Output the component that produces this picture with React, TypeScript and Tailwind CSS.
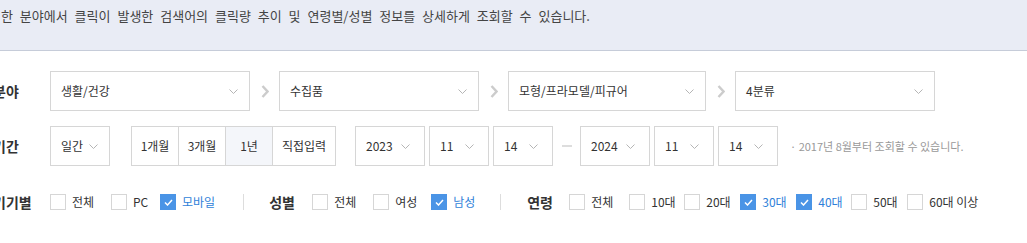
import React from "react";

const Chevron = () => (
  <svg width="9" height="5" viewBox="0 0 9 5" className="shrink-0">
    <polyline points="0.5,0.5 4.5,4.5 8.5,0.5" fill="none" stroke="#b5b5b5" strokeWidth="1" />
  </svg>
);

const Arrow = () => (
  <div className="w-[29px] flex justify-center">
    <svg width="8" height="13" viewBox="0 0 8 13">
      <polyline points="1.5,1 6.5,6.5 1.5,12" fill="none" stroke="#cccccc" strokeWidth="2.4" />
    </svg>
  </div>
);

const Select = ({ label, w, pr = "pr-[11px]" }: { label: string; w: string; pr?: string }) => (
  <div className={`${w} h-10 border border-[#d6d6d6] bg-white flex items-center justify-between pl-[10px] ${pr}`}>
    <span className="text-[12px] text-[#333]">{label}</span>
    <Chevron />
  </div>
);

const Check = ({ label, on, w }: { label: string; on?: boolean; w?: string }) => (
  <div className={`flex items-center gap-[6px] ${w ?? ""}`}>
    {on ? (
      <span className="w-4 h-4 bg-[#4a94e6] flex items-center justify-center">
        <svg width="9" height="7" viewBox="0 0 9 7">
          <polyline points="1,3.5 3.5,6 8,1" fill="none" stroke="#fff" strokeWidth="1.5" />
        </svg>
      </span>
    ) : (
      <span className="w-4 h-4 border border-[#d6d6d6] bg-white" />
    )}
    <span className={`text-[12px] ${on ? "text-[#2f7fd9]" : "text-[#333]"}`}>{label}</span>
  </div>
);

const Label = ({ children, w = "w-[57px]" }: { children: React.ReactNode; w?: string }) => (
  <div className={`${w} shrink-0 text-[14px] font-bold text-[#333]`}>{children}</div>
);

export default function App() {
  const periods = [
    { label: "1개월", w: "w-[48px]" },
    { label: "3개월", w: "w-[48px]" },
    { label: "1년", w: "w-[48px]", active: true },
    { label: "직접입력", w: "w-[64px]" },
  ];
  return (
    <div className="w-[1027px] h-[243px] overflow-hidden bg-white" style={{ fontFamily: '"Noto Sans CJK KR", "Noto Sans", sans-serif' }}>
      <div className="h-[51px] bg-[#e9ecf5] border-b border-[#c6ccd9] pt-[8px] pl-px">
        <p className="text-[13px] leading-4 text-[#444] [word-spacing:4px]">
          한 분야에서 클릭이 발생한 검색어의 클릭량 추이 및 연령별/성별 정보를 상세하게 조회할 수 있습니다.
        </p>
      </div>

      <div className="-ml-[7px] pt-5 flex flex-col">
        <div className="flex items-center h-10">
          <Label>분야</Label>
          <Select label="생활/건강" w="w-[200px]" />
          <Arrow />
          <Select label="수집품" w="w-[200px]" />
          <Arrow />
          <Select label="모형/프라모델/피규어" w="w-[198px]" />
          <Arrow />
          <Select label="4분류" w="w-[200px]" />
        </div>

        <div className="flex items-center h-10 mt-[15px]">
          <Label>기간</Label>
          <div className="w-[60px] h-10 border border-[#d6d6d6] flex items-center gap-[6px] pl-[10px]">
            <span className="text-[12px] text-[#333]">일간</span>
            <Chevron />
          </div>
          <div className="flex ml-[21px]">
            {periods.map((p, i) => (
              <div
                key={p.label}
                className={`${p.w} h-10 border border-[#d6d6d6] ${i > 0 ? "-ml-px" : ""} flex items-center justify-center text-[12px] text-[#333] ${p.active ? "bg-[#f4f6fa]" : "bg-white"}`}
              >
                {p.label}
              </div>
            ))}
          </div>
          <div className="flex items-center gap-[4px] ml-[19px]">
            <Select label="2023" w="w-[70px]" pr="pr-[14px]" />
            <Select label="11" w="w-[60px]" pr="pr-[14px]" />
            <Select label="14" w="w-[60px]" pr="pr-[14px]" />
          </div>
          <div className="w-[27px] flex justify-center">
            <div className="w-[10px] h-[2px] bg-[#dddddd]" />
          </div>
          <div className="flex items-center gap-[4px]">
            <Select label="2024" w="w-[70px]" pr="pr-[14px]" />
            <Select label="11" w="w-[60px]" pr="pr-[14px]" />
            <Select label="14" w="w-[60px]" pr="pr-[14px]" />
          </div>
          <span className="ml-[12px] text-[11px] text-[#999]">· 2017년 8월부터 조회할 수 있습니다.</span>
        </div>

        <div className="flex items-center h-4 mt-[28px]">
          <Label>기기별</Label>
          <Check label="전체" w="w-[61px]" />
          <Check label="PC" w="w-[49px]" />
          <Check label="모바일" on />
          <div className="w-px h-4 bg-[#dddddd] ml-[28px] mr-[25px]" />
          <Label w="w-[43px]">성별</Label>
          <Check label="전체" w="w-[61px]" />
          <Check label="여성" w="w-[58px]" />
          <Check label="남성" on />
          <div className="w-px h-4 bg-[#dddddd] ml-[25px] mr-[26px]" />
          <Label w="w-[42px]">연령</Label>
          <Check label="전체" w="w-[60px]" />
          <Check label="10대" w="w-[55px]" />
          <Check label="20대" w="w-[56px]" />
          <Check label="30대" on w="w-[56px]" />
          <Check label="40대" on w="w-[55px]" />
          <Check label="50대" w="w-[56px]" />
          <Check label="60대 이상" />
        </div>
      </div>
    </div>
  );
}
